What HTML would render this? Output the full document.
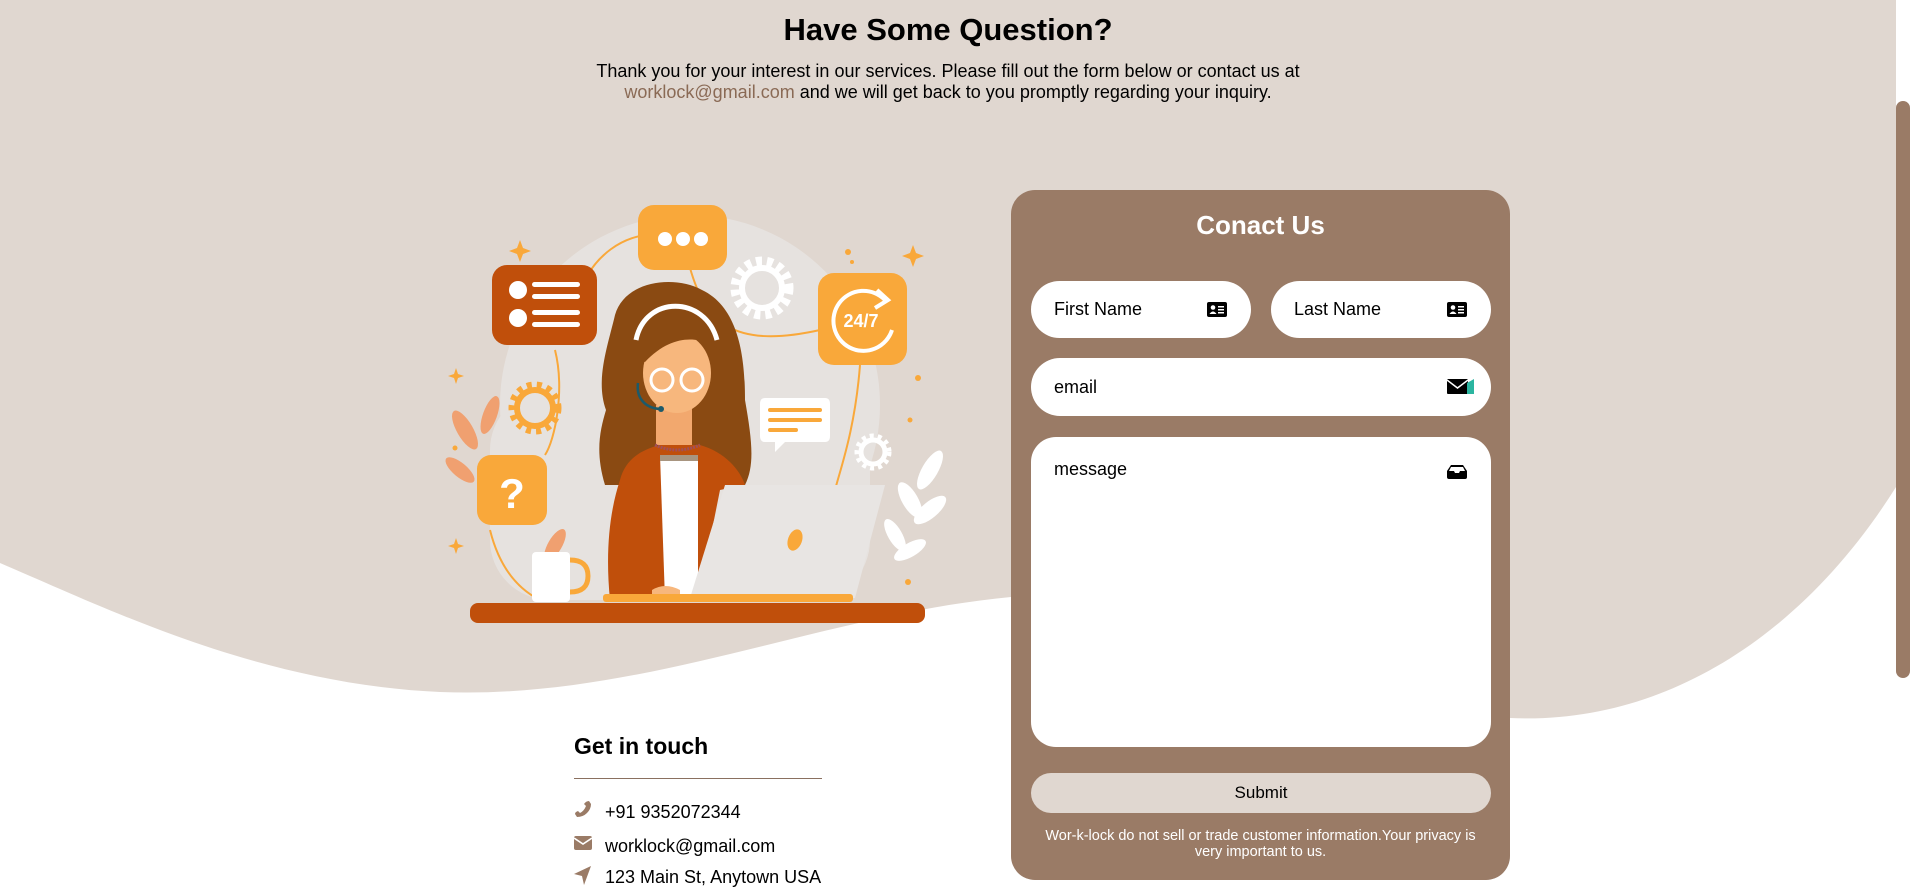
<!DOCTYPE html>
<html><head><meta charset="utf-8"><style>
html,body{margin:0;padding:0}
body{width:1910px;height:885px;position:relative;overflow:hidden;background:#fff;font-family:"Liberation Sans",Arial,sans-serif}
.abs{position:absolute}
h1{position:absolute;left:0;width:1896px;top:12px;margin:0;text-align:center;font-size:31px;font-weight:bold;color:#000}
.intro{position:absolute;left:0;width:1896px;top:61px;text-align:center;font-size:18px;line-height:21px;color:#000}
.intro a{color:#8a6a55;text-decoration:none}
.form{position:absolute;left:1011px;top:190px;width:499px;height:690px;background:#9a7b66;border-radius:24px}
.form h2{position:absolute;left:0;width:100%;top:20px;margin:0;text-align:center;color:#fff;font-size:26px;font-weight:bold}
.inp{position:absolute;background:#fff;border-radius:29px;font-size:18px;color:#000}
.inp span{position:absolute;left:23px}
.inp svg{position:absolute}
.sub{position:absolute;left:20px;top:583px;width:460px;height:40px;border-radius:20px;background:#e0d7d0;text-align:center;line-height:40px;font-size:17px;color:#000}
.note{position:absolute;left:25px;width:449px;top:638px;text-align:center;color:#fff;font-size:14.5px;line-height:16px}
.git{position:absolute;left:574px;top:733px;font-size:23px;font-weight:bold;color:#000}
.hr{position:absolute;left:574px;top:778px;width:248px;height:1px;background:#8a7060}
.item{position:absolute;left:605px;font-size:18px;color:#000}
</style></head><body>
<svg class="abs" style="left:0;top:0" width="1910" height="885">
<path d="M0,0 H1896 V487 C1800,640 1660,725 1510,718 C1330,708 1180,585 1011,597 C820,615 640,700 440,692 C260,684 110,610 0,563 Z" fill="#e0d7d0"/>
<rect x="1896" y="0" width="14" height="885" fill="#fff"/>
<rect x="1896" y="101" width="14" height="577" rx="7" fill="#9a7b66"/>
</svg>
<h1>Have Some Question?</h1>
<div class="intro">Thank you for your interest in our services. Please fill out the form below or contact us at<br><a>worklock@gmail.com</a> and we will get back to you promptly regarding your inquiry.</div>

<svg class="abs" style="left:440px;top:190px" width="540" height="440" viewBox="0 0 540 440">
<circle cx="250" cy="215" r="190" fill="#e6e2df"/>
<rect x="50" y="200" width="380" height="210" rx="60" fill="#e6e2df"/>
<path d="M135,115 C150,60 190,45 210,45 M250,78 C265,130 290,160 380,140 M420,175 C415,240 400,280 395,300 M115,160 C125,200 115,250 105,265 M50,340 C60,380 80,400 100,410" stroke="#f9a83a" stroke-width="2" fill="none"/>
<g fill="#f0a070"><ellipse cx="25" cy="240" rx="8" ry="22" transform="rotate(-30 25 240)"/><ellipse cx="50" cy="225" rx="7" ry="20" transform="rotate(20 50 225)"/><ellipse cx="20" cy="280" rx="7" ry="18" transform="rotate(-50 20 280)"/><ellipse cx="115" cy="355" rx="7" ry="18" transform="rotate(30 115 355)"/></g>
<g fill="#fff"><ellipse cx="490" cy="280" rx="8" ry="22" transform="rotate(30 490 280)"/><ellipse cx="470" cy="310" rx="8" ry="20" transform="rotate(-30 470 310)"/><ellipse cx="490" cy="320" rx="8" ry="20" transform="rotate(50 490 320)"/><ellipse cx="455" cy="345" rx="7" ry="18" transform="rotate(-30 455 345)"/><ellipse cx="470" cy="360" rx="7" ry="18" transform="rotate(60 470 360)"/></g>
<g fill="none" stroke="#fff" stroke-width="9" stroke-dasharray="6 5"><circle cx="322" cy="98" r="27"/></g>
<circle cx="322" cy="98" r="20" fill="none" stroke="#fff" stroke-width="6"/>
<circle cx="95" cy="218" r="18" fill="none" stroke="#f9a83a" stroke-width="6"/>
<circle cx="95" cy="218" r="23" fill="none" stroke="#f9a83a" stroke-width="7" stroke-dasharray="5 5"/>
<circle cx="433" cy="262" r="12" fill="none" stroke="#fff" stroke-width="5"/>
<circle cx="433" cy="262" r="16" fill="none" stroke="#fff" stroke-width="5" stroke-dasharray="4 4"/>
<rect x="52" y="75" width="105" height="80" rx="15" fill="#c04f0b"/>
<g fill="#fff"><circle cx="78" cy="100" r="9"/><circle cx="78" cy="128" r="9"/><rect x="92" y="92" width="48" height="5" rx="2.5"/><rect x="92" y="104" width="48" height="5" rx="2.5"/><rect x="92" y="120" width="48" height="5" rx="2.5"/><rect x="92" y="132" width="48" height="5" rx="2.5"/></g>
<rect x="198" y="15" width="89" height="65" rx="16" fill="#f9a83a"/>
<g fill="#fff"><circle cx="225" cy="49" r="7"/><circle cx="243" cy="49" r="7"/><circle cx="261" cy="49" r="7"/></g>
<rect x="378" y="83" width="89" height="92" rx="16" fill="#f9a83a"/>
<path d="M445,110 A30,30 0 1 0 452,140" fill="none" stroke="#fff" stroke-width="4"/>
<path d="M437,100 L448,110 L435,118" fill="none" stroke="#fff" stroke-width="4"/>
<text x="421" y="137" text-anchor="middle" font-size="18" font-weight="bold" fill="#fff" font-family="Liberation Sans,sans-serif">24/7</text>
<rect x="37" y="265" width="70" height="70" rx="14" fill="#f9a83a"/>
<text x="72" y="318" text-anchor="middle" font-size="42" font-weight="bold" fill="#fff" font-family="Liberation Sans,sans-serif">?</text>
<path d="M325,208 H385 Q390,208 390,214 V246 Q390,252 385,252 H345 L335,262 L335,252 H325 Q320,252 320,246 V214 Q320,208 325,208 Z" fill="#fff"/>
<g fill="#f9a83a"><rect x="328" y="218" width="54" height="4" rx="2"/><rect x="328" y="228" width="54" height="4" rx="2"/><rect x="328" y="238" width="30" height="4" rx="2"/></g>
<g fill="#f9a83a"><circle cx="408" cy="62" r="3"/><circle cx="412" cy="72" r="2"/><circle cx="478" cy="188" r="3"/><circle cx="470" cy="230" r="2.5"/><circle cx="468" cy="392" r="3"/><circle cx="15" cy="258" r="2.5"/>
<path d="M80,50 l3,8 8,3 -8,3 -3,8 -3,-8 -8,-3 8,-3z"/><path d="M473,55 l3,8 8,3 -8,3 -3,8 -3,-8 -8,-3 8,-3z"/><path d="M16,178 l2,6 6,2 -6,2 -2,6 -2,-6 -6,-2 6,-2z"/><path d="M16,348 l2,6 6,2 -6,2 -2,6 -2,-6 -6,-2 6,-2z"/></g>
<path d="M175,125 C185,90 235,85 262,100 C300,118 305,170 305,210 C312,250 315,275 305,295 L165,295 C155,262 160,240 166,220 C155,190 168,155 175,125 Z" fill="#8a4a12"/>
<rect x="216" y="215" width="36" height="40" fill="#f2a86e"/>
<ellipse cx="237" cy="183" rx="34" ry="40" fill="#f7b77d"/>
<path d="M200,170 C200,125 270,118 280,160 C265,148 235,140 205,172 Z" fill="#8a4a12"/>
<path d="M196,150 C205,105 265,105 277,150" fill="none" stroke="#fff" stroke-width="5"/>
<circle cx="222" cy="190" r="11" fill="none" stroke="#fff" stroke-width="3"/><circle cx="252" cy="190" r="11" fill="none" stroke="#fff" stroke-width="3"/>
<path d="M198,193 C196,208 205,218 220,219" fill="none" stroke="#1c5a6a" stroke-width="2.5"/><circle cx="221" cy="219" r="3" fill="#1c5a6a"/>
<path d="M180,290 C185,270 200,260 220,255 L260,255 C285,262 300,280 305,295 L280,300 L258,410 L170,410 C165,360 170,320 180,290 Z" fill="#c04f0b"/>
<path d="M220,265 L258,265 L258,410 L225,410 Z" fill="#fff"/>
<rect x="220" y="265" width="38" height="6" fill="#a89580"/>
<path d="M215,255 Q237,265 260,255" fill="none" stroke="#a0505a" stroke-width="3" stroke-dasharray="2 1"/>
<path d="M285,295 L445,295 L415,408 L250,408 Z" fill="#e8e5e3"/>
<ellipse cx="355" cy="350" rx="7" ry="11" fill="#f9a83a" transform="rotate(20 355 350)"/>
<path d="M212,400 Q225,392 240,400 L240,410 L212,410 Z" fill="#f7b77d"/>
<rect x="163" y="404" width="250" height="8" rx="3" fill="#f9a83a"/>
<rect x="92" y="362" width="38" height="50" rx="4" fill="#fff"/>
<path d="M130,370 Q148,370 148,386 Q148,402 130,402" fill="none" stroke="#f9a83a" stroke-width="5"/>
<rect x="30" y="413" width="455" height="20" rx="8" fill="#c04f0b"/>
</svg>

<div class="form">
<h2>Conact Us</h2>
<div class="inp" style="left:20px;top:91px;width:220px;height:57px"><span style="top:18px">First Name</span>
<svg style="left:176px;top:21px" width="20" height="15" viewBox="0 0 20 15"><rect width="20" height="15" rx="2" fill="#000"/><circle cx="6" cy="5.5" r="2.3" fill="#fff"/><path d="M2.5,12 Q6,7 9.5,12Z" fill="#fff"/><rect x="11" y="4" width="6" height="1.5" fill="#fff"/><rect x="11" y="7" width="6" height="1.5" fill="#fff"/><rect x="11" y="10" width="6" height="1.5" fill="#fff"/></svg></div>
<div class="inp" style="left:260px;top:91px;width:220px;height:57px"><span style="top:18px">Last Name</span>
<svg style="left:176px;top:21px" width="20" height="15" viewBox="0 0 20 15"><rect width="20" height="15" rx="2" fill="#000"/><circle cx="6" cy="5.5" r="2.3" fill="#fff"/><path d="M2.5,12 Q6,7 9.5,12Z" fill="#fff"/><rect x="11" y="4" width="6" height="1.5" fill="#fff"/><rect x="11" y="7" width="6" height="1.5" fill="#fff"/><rect x="11" y="10" width="6" height="1.5" fill="#fff"/></svg></div>
<div class="inp" style="left:20px;top:168px;width:460px;height:58px"><span style="top:19px">email</span>
<svg style="left:416px;top:20px" width="28" height="17" viewBox="0 0 28 17"><rect x="0" y="1" width="21" height="15" rx="1" fill="#000"/><path d="M0,2 L10.5,10 L21,2" stroke="#fff" stroke-width="1.5" fill="none"/><path d="M20,5 L27,1 V16 H20Z" fill="#2bb5a0"/></svg></div>
<div class="inp" style="left:20px;top:247px;width:460px;height:310px;border-radius:25px"><span style="top:22px">message</span>
<svg style="left:416px;top:27px" width="20" height="15" viewBox="0 0 20 15"><path d="M4,1 H16 L20,7 V13 Q20,15 18,15 H2 Q0,15 0,13 V7 Z" fill="#000"/><path d="M4,3 H16 L18,7 H13 L12,9 H8 L7,7 H2 Z" fill="#fff"/></svg></div>
<div class="sub">Submit</div>
<div class="note">Wor-k-lock do not sell or trade customer information.Your privacy is very important to us.</div>
</div>

<div class="git">Get in touch</div>
<div class="hr"></div>
<svg class="abs" style="left:574px;top:800px" width="18" height="18" viewBox="0 0 18 18"><path d="M15,1 L17,4 Q17,9 13,13 Q9,17 3,17 L1,14 Q1,12 4,11 L6,13 Q10,11 12,6 L10,4 Q12,1 15,1Z" fill="#9a7b66"/></svg>
<div class="item" style="top:802px">+91 9352072344</div>
<svg class="abs" style="left:574px;top:836px" width="18" height="14" viewBox="0 0 18 14"><rect width="18" height="14" rx="2" fill="#9a7b66"/><path d="M0,2 L9,8 L18,2" stroke="#fff" stroke-width="1.6" fill="none"/></svg>
<div class="item" style="top:836px">worklock@gmail.com</div>
<svg class="abs" style="left:574px;top:866px" width="18" height="19" viewBox="0 0 18 19"><path d="M17,0 L0,8 L8,10 L10,19 Z" fill="#9a7b66"/></svg>
<div class="item" style="top:867px">123 Main St, Anytown USA</div>
</body></html>
